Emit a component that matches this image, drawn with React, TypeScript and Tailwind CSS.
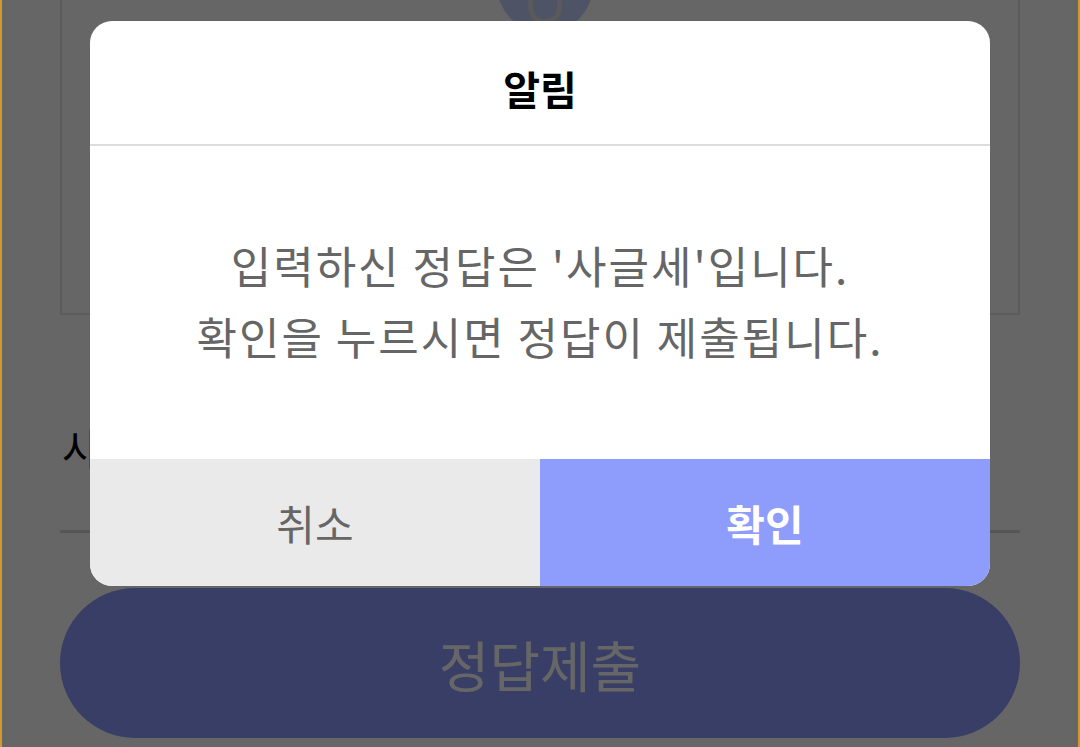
import { useState } from "react";

const font = "font-['Noto_Sans_CJK_KR','Noto_Sans',sans-serif]";

function ConfirmDialog({ onClose }: { onClose: () => void }) {
  return (
    <div className="absolute inset-0 z-40 flex items-start justify-center bg-black/60 pt-[21px]">
      <div
        className="flex w-[900px] flex-col overflow-hidden rounded-[22px] bg-white"
        role="dialog"
        aria-modal="true"
      >
        {/* Header */}
        <div className="flex h-[125px] items-center justify-center border-b-2 border-[#dcdcdc] pt-[10px]">
          <span className="text-[40px] font-bold text-black">알림</span>
        </div>

        {/* Message */}
        <div className="flex h-[313px] flex-col items-center justify-center pb-[4px] text-[44px] leading-[71px] tracking-[2px] text-[#666666]">
          <p>입력하신 정답은 '사글세'입니다.</p>
          <p>확인을 누르시면 정답이 제출됩니다.</p>
        </div>

        {/* Actions */}
        <div className="grid h-[127px] grid-cols-2">
          <button
            onClick={onClose}
            className="flex items-center justify-center bg-[#eaeaea] text-[42px] text-[#666666]"
          >
            취소
          </button>
          <button
            onClick={onClose}
            className="flex items-center justify-center bg-[#8e9cfc] text-[42px] font-bold text-white"
          >
            확인
          </button>
        </div>
      </div>
    </div>
  );
}

export default function App() {
  const [open, setOpen] = useState(true);

  return (
    <div className={`relative h-[747px] w-[1080px] overflow-hidden bg-white ${font}`}>
      {/* Page behind the dialog */}
      <div className="flex flex-col px-[60px]">
        <div className="relative -mt-[40px] h-[355px] border-2 border-[#e6e6e6]" />

        <div className="mt-[107px] pl-[2px] text-[42px] leading-[50px] text-black">사진 속 단어를 입력하세요</div>

        <div className="mt-[6px] h-[55px] border-b-[3px] border-[#d8d8d8]" />

        <button className="mt-[55px] flex h-[150px] items-center justify-center rounded-full bg-[#8e9bff] text-[55px] text-white">
          정답제출
        </button>
      </div>

      {/* Round badge at top */}
      <div className="absolute left-[497px] top-[-63px] flex h-[96px] w-[96px] items-end justify-center rounded-full bg-[#c6d0ff] pb-[2px] text-[50px] leading-none text-[#e0e0e0]">
        <span className="font-['Liberation_Sans',sans-serif]">Q</span>
      </div>

      {open && <ConfirmDialog onClose={() => setOpen(false)} />}

      {/* Window frame edges */}
      <div className="pointer-events-none absolute inset-0 z-50 border-x-2 border-[#d29a2e]" />
    </div>
  );
}
